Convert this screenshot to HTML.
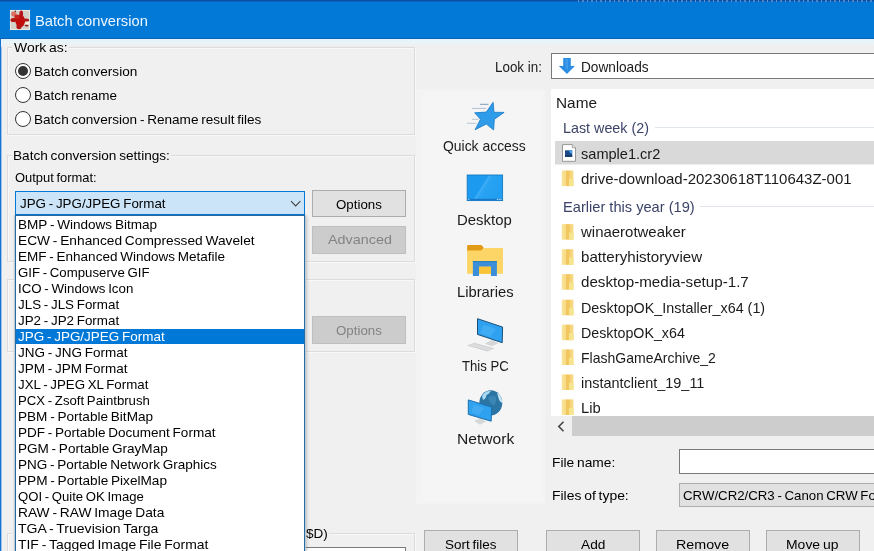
<!DOCTYPE html>
<html><head><meta charset="utf-8"><title>Batch conversion</title>
<style>
*{box-sizing:border-box;margin:0;padding:0}
html,body{width:874px;height:551px;overflow:hidden;background:#f0f0f0;font-family:"Liberation Sans",sans-serif;color:#000}
.a{position:absolute}
.tx{position:absolute;white-space:pre;line-height:20px;height:20px;transform-origin:0 0}
.gb{position:absolute;border:1px solid #dcdcdc;box-shadow:1px 1px 0 #f8f8f8, inset 1px 1px 0 #f8f8f8}
.mask{position:absolute;background:#f0f0f0}
.radio{position:absolute;width:16px;height:16px;border:1px solid #333;border-radius:50%;background:#fff}
.btn{position:absolute;border:1px solid #adadad;background:#e1e1e1}
.btn.dis{background:#cccccc;border-color:#bfbfbf}
svg{position:absolute;overflow:visible}
</style></head><body>
<!-- title bar -->
<div class="a" style="left:0;top:0;width:874px;height:39px;background:#0278d7"></div>
<div class="a" style="left:0;top:38px;width:874px;height:1px;background:#0a63b6"></div>
<div class="a" style="left:0;top:0;width:874px;height:1px;background:#0b4fa3"></div>
<div class="a" style="left:0;top:1px;width:874px;height:1px;background:#0a62c2"></div>
<div class="a" style="left:578px;top:0;width:296px;height:2px;opacity:.45;background:repeating-linear-gradient(90deg,#cfe0f5 0,#cfe0f5 1px,transparent 1px,transparent 4px,#9fbfe8 4px,#9fbfe8 6px,transparent 6px,transparent 9px)"></div>
<div class="a" style="left:0;top:39px;width:1px;height:512px;background:#1771d0"></div>
<div class="a" style="left:1px;top:42px;width:1px;height:509px;background:#9cc3ea"></div>
<div class="a" style="left:1px;top:39px;width:873px;height:8px;background:linear-gradient(#e4f4fb,#e9f4f8 50%,#efefec)"></div>

<!-- Work as group -->
<div class="gb" style="left:7px;top:47px;width:408px;height:88px"></div>
<div class="mask" style="left:12px;top:44px;width:57px;height:8px"></div>
<div class="radio" style="left:15px;top:63px"></div>
<div class="a" style="left:18px;top:66px;width:10px;height:10px;border-radius:50%;background:#333"></div>
<div class="radio" style="left:15px;top:87px"></div>
<div class="radio" style="left:15px;top:111px"></div>

<!-- settings group -->
<div class="gb" style="left:7px;top:155px;width:408px;height:107px"></div>
<div class="mask" style="left:12px;top:152px;width:159px;height:8px"></div>
<div class="a" style="left:15px;top:191px;width:290px;height:24px;border:1px solid #0078d7;background:#cce4f7"></div>
<svg style="left:290px;top:200px" width="12" height="8" viewBox="0 0 12 8"><path d="M1 1.2 L5.7 5.9 L10.4 1.2" fill="none" stroke="#444" stroke-width="1.1"/></svg>
<div class="btn" style="left:312px;top:190px;width:94px;height:27px"></div>
<div class="btn dis" style="left:312px;top:226px;width:94px;height:28px"></div>

<!-- third group -->
<div class="gb" style="left:7px;top:279px;width:408px;height:73px"></div>
<div class="btn dis" style="left:312px;top:316px;width:94px;height:28px"></div>

<!-- bottom-left group -->
<div class="gb" style="left:7px;top:533px;width:408px;height:40px"></div>
<div class="mask" style="left:12px;top:530px;width:317px;height:8px"></div>
<div class="a" style="left:200px;top:547px;width:206px;height:20px;border:1px solid #7a7a7a;background:#fff"></div>

<!-- dropdown list -->
<div class="a" style="left:14px;top:215px;width:292px;height:340px;background:#fff;border:1px solid rgba(47,111,160,.35);box-shadow:1px 1px 3px rgba(0,0,0,.2)"></div>
<div class="a" style="left:15px;top:215px;width:290px;height:340px;background:#fff;border:1px solid #2a6a9c"></div>
<div class="a" style="left:16px;top:329px;width:288px;height:15px;background:#0078d7"></div>

<!-- right: look in -->
<div class="a" style="left:551px;top:53px;width:340px;height:26px;border:1px solid #7a7a7a;background:#fff"></div>
<!-- places bar -->
<div class="a" style="left:416px;top:89px;width:129px;height:415px;background:#f3f3f3"></div>
<div class="a" style="left:423px;top:91px;width:120px;height:411px;background:#f5f5f5"></div>
<!-- file list -->
<div class="a" style="left:551px;top:89px;width:330px;height:327px;background:#fff"></div>
<div class="a" style="left:655px;top:127px;width:230px;height:1px;background:#dfe5eb"></div>
<div class="a" style="left:700px;top:206px;width:230px;height:1px;background:#dfe5eb"></div>
<div class="a" style="left:555px;top:141px;width:330px;height:23px;background:#d9d9d9"></div>
<div class="a" style="left:555px;top:164px;width:330px;height:1px;background:#ececec"></div>
<!-- scrollbar -->
<div class="a" style="left:572px;top:416px;width:310px;height:20px;background:#cdcdcd"></div>
<svg style="left:557px;top:421px" width="8" height="11" viewBox="0 0 8 11"><path d="M6.5 0.8 L1.8 5.5 L6.5 10.2" fill="none" stroke="#444" stroke-width="1.6"/></svg>
<!-- file name / type -->
<div class="a" style="left:679px;top:449px;width:220px;height:25px;border:1px solid #7a7a7a;background:#fff"></div>
<div class="a" style="left:679px;top:483px;width:220px;height:24px;border:1px solid #adadad;background:#e1e1e1"></div>
<!-- bottom buttons -->
<div class="btn" style="left:424px;top:530px;width:94px;height:30px"></div>
<div class="btn" style="left:546px;top:530px;width:94px;height:30px"></div>
<div class="btn" style="left:656px;top:530px;width:94px;height:30px"></div>
<div class="btn" style="left:766px;top:530px;width:94px;height:30px"></div>

<svg style="left:0;top:0" width="874" height="551" viewBox="0 0 874 551">
<defs><filter id="b4" x="-20%" y="-20%" width="140%" height="140%"><feGaussianBlur stdDeviation="0.45"/></filter><filter id="b6" x="-20%" y="-20%" width="140%" height="140%"><feGaussianBlur stdDeviation="0.6"/></filter><filter id="b7" x="-20%" y="-20%" width="140%" height="140%"><feGaussianBlur stdDeviation="0.8"/></filter>
<linearGradient id="fold" x1="0" x2="1" y1="0" y2="0"><stop offset="0" stop-color="#f8e49a"/><stop offset="0.33" stop-color="#f6dc86"/><stop offset="0.4" stop-color="#f2c55e"/><stop offset="0.68" stop-color="#f3c964"/><stop offset="0.75" stop-color="#f6d57c"/><stop offset="1" stop-color="#f7da86"/></linearGradient>
<linearGradient id="desk" gradientUnits="userSpaceOnUse" x1="469.2" y1="178.9" x2="494.7" y2="194.9"><stop offset="0" stop-color="#1c9bf0"/><stop offset="0.46" stop-color="#1a9af0"/><stop offset="0.52" stop-color="#3eaef6"/><stop offset="0.6" stop-color="#2aa3f3"/><stop offset="1" stop-color="#239ff1"/></linearGradient>
</defs>
<rect x="10" y="10" width="20" height="20" fill="#d2d0c8"/>
<rect x="10.4" y="10.4" width="19.2" height="19.2" fill="none" stroke="#ecebe6" stroke-width="0.9"/>
<clipPath id="icl"><rect x="10" y="10" width="20" height="20"/></clipPath>
<g clip-path="url(#icl)"><g filter="url(#b6)">
<ellipse cx="13.8" cy="14" rx="2.6" ry="2.5" fill="#dc6f62"/>
<ellipse cx="20.2" cy="21" rx="4.8" ry="6.2" fill="#c20f0d"/>
<ellipse cx="21.2" cy="14" rx="1.9" ry="3.4" fill="#b5181a"/>
<ellipse cx="17" cy="17" rx="2.6" ry="2.4" fill="#c9201c"/>
<ellipse cx="13.6" cy="20" rx="3.2" ry="2" fill="#b51210"/>
<ellipse cx="26" cy="20" rx="3.2" ry="1.6" fill="#b31413"/>
<ellipse cx="19" cy="26.8" rx="2.6" ry="2.4" fill="#b41313"/>
<ellipse cx="27.2" cy="23.2" rx="1.9" ry="1.4" fill="#fbf1dc"/>
<ellipse cx="26.6" cy="25.6" rx="2" ry="0.9" fill="#8f1a17"/>
<ellipse cx="15.4" cy="11.2" rx="0.7" ry="0.8" fill="#4a2422"/>
</g></g>
<g filter="url(#b4)"><path d="M563.2 58.1H570.8V65.9H574.9L567 74L558.8 65.9H563.2Z" fill="#2c8de1"/><path d="M565.5 59V67L568 71V59Z" fill="#4aa3ee" opacity=".7"/></g>
<g filter="url(#b4)">
<path d="M480 104.3H488.5" stroke="#6f8fb3" stroke-width="0.9"/><path d="M472 108.4H486" stroke="#a7b9cf" stroke-width="0.9"/><path d="M472 119.3H478.7" stroke="#b3c2d4" stroke-width="0.9"/><path d="M467 123.3H476.5" stroke="#b3c2d4" stroke-width="0.9"/>
<path d="M493.1 102.3L494 112.3L504.1 112.4L494.3 119.3L493.6 129.9L486.3 124L475.1 129.7L480.5 119.3L474.7 112.8L486.3 112.1Z" fill="#2f9ce9" stroke="#1f7fcc" stroke-width="0.9" stroke-linejoin="round"/>
</g>
<g filter="url(#b4)"><rect x="467.2" y="175" width="35.4" height="25.6" fill="url(#desk)" stroke="#1679c2" stroke-width="0.9"/><rect x="467.6" y="198.8" width="34.6" height="1.6" fill="#1579c8"/>
<rect x="468.3" y="198.9" width="1" height="1" fill="#e8f6ff"/>
<rect x="496.9" y="198.9" width="1" height="1" fill="#e8f6ff"/>
<rect x="498.7" y="198.9" width="1" height="1" fill="#e8f6ff"/>
<rect x="500.5" y="198.9" width="1" height="1" fill="#e8f6ff"/>
</g>
<g filter="url(#b4)">
<path d="M467.1 246.2Q467.1 245.1 468.2 245.1H481.6L483.8 248L481.6 250.9H467.1Z" fill="#e29b12"/>
<path d="M467.1 250.5H481.5L483.6 248H503V273.8H467.1Z" fill="#fcd566"/>
<rect x="467.1" y="248" width="2" height="25.8" fill="#fbe08a" opacity=".0"/>
<rect x="479" y="266.5" width="12" height="7.3" fill="#f9c537"/>
<path d="M472.9 261H496.9V276H491V266.5H479V276H472.9Z" fill="#3b8fd8"/>
<path d="M472.9 261H496.9V262.2H472.9Z" fill="#2f80c5"/>
</g>
<g filter="url(#b4)">
<path d="M484.7 343.5L492 340L498.6 343.2L491.5 346.2Z" fill="#d4d6d8"/>
<path d="M466.8 345.4L474.4 342.7L494.6 348.5L487.7 351.5Z" fill="#cfd0d2"/>
<path d="M470 344.8L490.5 350.4M472.3 344L492.6 349.6" stroke="#efefef" stroke-width="0.6"/>
<path d="M477.5 318.7L502.6 327.1L502.2 342.7L477.5 334.4Z" fill="#2da2f1" stroke="#1c4f74" stroke-width="1"/>
<path d="M484 325L496 329L490 337L480 333Z" fill="#59b8f7" opacity=".45"/>
</g>
<g filter="url(#b4)">
<ellipse cx="490.8" cy="402.8" rx="11.5" ry="12.6" fill="#2c74a3"/>
<path d="M482 396Q485 390.5 491 391Q489 394 486.5 395Q486 399 483 400Z" fill="#a9daf2"/>
<path d="M497 392.5Q502 396 502.2 403Q499.5 402 498.5 398Z" fill="#c5e6f6"/>
<path d="M488 398Q492 394 496 397Q497 402 494 405Q490 404 488 398Z" fill="#3a86b5"/>
<path d="M474 421L480.5 418L486.2 421.5L480 424.7Z" fill="#d6d8da"/>
<path d="M468.3 399.9L491.6 407.1L491.2 421.2L468.3 414.4Z" fill="#2fa1ef" stroke="#1d70ae" stroke-width="1"/>
<path d="M474 405L484 408L479 415L471 412.5Z" fill="#5dbaf8" opacity=".4"/>
</g>
<g filter="url(#b4)">
<path d="M562.5 144.6H572.3L575.5 147.8V161.3H562.5Z" fill="#fff" stroke="#8e8e8e" stroke-width="0.9"/>
<path d="M572.3 144.6V147.8H575.5" fill="#eee" stroke="#8e8e8e" stroke-width="0.8"/>
<rect x="565" y="150.3" width="7.2" height="6.6" fill="#1a4a86"/>
<path d="M568.5 150.3H572.2V154Q569.5 153.5 568.5 150.3Z" fill="#4aa0e6"/>
<rect x="565" y="155.2" width="7.2" height="1.7" fill="#14386a"/>
</g>
<clipPath id="fcl"><rect x="551" y="89" width="330" height="327"/></clipPath><g clip-path="url(#fcl)"><g filter="url(#b6)">
<rect x="561.8" y="170.5" width="11.6" height="15.6" fill="url(#fold)"/>
<rect x="569" y="178.9" width="4.6" height="7.2" fill="#f6e48e"/>
<rect x="561.8" y="224.1" width="11.6" height="15.6" fill="url(#fold)"/>
<rect x="569" y="232.5" width="4.6" height="7.2" fill="#f6e48e"/>
<rect x="561.8" y="249.2" width="11.6" height="15.6" fill="url(#fold)"/>
<rect x="569" y="257.6" width="4.6" height="7.2" fill="#f6e48e"/>
<rect x="561.8" y="274.1" width="11.6" height="15.6" fill="url(#fold)"/>
<rect x="569" y="282.5" width="4.6" height="7.2" fill="#f6e48e"/>
<rect x="561.8" y="299.7" width="11.6" height="15.6" fill="url(#fold)"/>
<rect x="569" y="308.1" width="4.6" height="7.2" fill="#f6e48e"/>
<rect x="561.8" y="324.6" width="11.6" height="15.6" fill="url(#fold)"/>
<rect x="569" y="333.0" width="4.6" height="7.2" fill="#f6e48e"/>
<rect x="561.8" y="349.4" width="11.6" height="15.6" fill="url(#fold)"/>
<rect x="569" y="357.8" width="4.6" height="7.2" fill="#f6e48e"/>
<rect x="561.8" y="374.4" width="11.6" height="15.6" fill="url(#fold)"/>
<rect x="569" y="382.8" width="4.6" height="7.2" fill="#f6e48e"/>
<rect x="561.8" y="399.4" width="11.6" height="15.6" fill="url(#fold)"/>
<rect x="569" y="407.8" width="4.6" height="7.2" fill="#f6e48e"/>
</g></g>
</svg>
<div class="tx" style="left:35.00px;top:11px;font-size:14.5px;transform:scaleX(1.0142);color:#eef7ff">Batch conversion</div>
<div class="tx" style="left:14.00px;top:38px;font-size:13.5px;transform:scaleX(1.0318);word-spacing:-1px">Work as:</div>
<div class="tx" style="left:34.00px;top:62px;font-size:13.5px;transform:scaleX(1.0074);word-spacing:-1px">Batch conversion</div>
<div class="tx" style="left:34.00px;top:86px;font-size:13.5px;transform:scaleX(0.9981);word-spacing:-1px">Batch rename</div>
<div class="tx" style="left:34.00px;top:110px;font-size:13.5px;transform:scaleX(1.0054);word-spacing:-1px">Batch conversion - Rename result files</div>
<div class="tx" style="left:13.00px;top:146px;font-size:13.5px;transform:scaleX(1.0085);word-spacing:-1px">Batch conversion settings:</div>
<div class="tx" style="left:15.00px;top:168px;font-size:13.5px;transform:scaleX(0.9580);word-spacing:-1px">Output format:</div>
<div class="tx" style="left:20.00px;top:194px;font-size:13.5px;transform:scaleX(0.9902);word-spacing:-1px">JPG - JPG/JPEG Format</div>
<div class="tx" style="left:336.00px;top:195px;font-size:13.5px;transform:scaleX(0.9851)">Options</div>
<div class="tx" style="left:328.00px;top:230px;font-size:13.5px;transform:scaleX(1.0643);color:#838383">Advanced</div>
<div class="tx" style="left:336.00px;top:321px;font-size:13.5px;transform:scaleX(0.9851);color:#838383">Options</div>
<div class="tx" style="left:306.00px;top:524px;font-size:13.5px;transform:scaleX(0.9991)">$D)</div>
<div class="tx" style="left:18.00px;top:215px;font-size:13.5px;transform:scaleX(1.0037);word-spacing:-1px">BMP - Windows Bitmap</div>
<div class="tx" style="left:18.00px;top:231px;font-size:13.5px;transform:scaleX(1.0172);word-spacing:-1px">ECW - Enhanced Compressed Wavelet</div>
<div class="tx" style="left:18.00px;top:247px;font-size:13.5px;transform:scaleX(1.0014);word-spacing:-1px">EMF - Enhanced Windows Metafile</div>
<div class="tx" style="left:18.00px;top:263px;font-size:13.5px;transform:scaleX(0.9790);word-spacing:-1px">GIF - Compuserve GIF</div>
<div class="tx" style="left:18.00px;top:279px;font-size:13.5px;transform:scaleX(0.9851);word-spacing:-1px">ICO - Windows Icon</div>
<div class="tx" style="left:18.00px;top:295px;font-size:13.5px;transform:scaleX(0.9913);word-spacing:-1px">JLS - JLS Format</div>
<div class="tx" style="left:18.00px;top:311px;font-size:13.5px;transform:scaleX(0.9913);word-spacing:-1px">JP2 - JP2 Format</div>
<div class="tx" style="left:18.00px;top:327px;font-size:13.5px;transform:scaleX(0.9975);word-spacing:-1px;color:#fff">JPG - JPG/JPEG Format</div>
<div class="tx" style="left:18.00px;top:343px;font-size:13.5px;transform:scaleX(0.9994);word-spacing:-1px">JNG - JNG Format</div>
<div class="tx" style="left:18.00px;top:359px;font-size:13.5px;transform:scaleX(0.9994);word-spacing:-1px">JPM - JPM Format</div>
<div class="tx" style="left:18.00px;top:375px;font-size:13.5px;transform:scaleX(0.9852);word-spacing:-1px">JXL - JPEG XL Format</div>
<div class="tx" style="left:18.00px;top:391px;font-size:13.5px;transform:scaleX(0.9765);word-spacing:-1px">PCX - Zsoft Paintbrush</div>
<div class="tx" style="left:18.00px;top:407px;font-size:13.5px;transform:scaleX(1.0056);word-spacing:-1px">PBM - Portable BitMap</div>
<div class="tx" style="left:18.00px;top:423px;font-size:13.5px;transform:scaleX(1.0019);word-spacing:-1px">PDF - Portable Document Format</div>
<div class="tx" style="left:18.00px;top:439px;font-size:13.5px;transform:scaleX(1.0026);word-spacing:-1px">PGM - Portable GrayMap</div>
<div class="tx" style="left:18.00px;top:455px;font-size:13.5px;transform:scaleX(1.0006);word-spacing:-1px">PNG - Portable Network Graphics</div>
<div class="tx" style="left:18.00px;top:471px;font-size:13.5px;transform:scaleX(1.0079);word-spacing:-1px">PPM - Portable PixelMap</div>
<div class="tx" style="left:18.00px;top:487px;font-size:13.5px;transform:scaleX(0.9717);word-spacing:-1px">QOI - Quite OK Image</div>
<div class="tx" style="left:18.00px;top:503px;font-size:13.5px;transform:scaleX(1.0196);word-spacing:-1px">RAW - RAW Image Data</div>
<div class="tx" style="left:18.00px;top:519px;font-size:13.5px;transform:scaleX(1.0407);word-spacing:-1px">TGA - Truevision Targa</div>
<div class="tx" style="left:18.00px;top:535px;font-size:13.5px;transform:scaleX(1.0315);word-spacing:-1px">TIF - Tagged Image File Format</div>
<div class="tx" style="left:495.00px;top:57px;font-size:14.5px;transform:scaleX(0.9239);color:#1b1b1b">Look in:</div>
<div class="tx" style="left:581.00px;top:57px;font-size:14.5px;transform:scaleX(0.9421);color:#1b1b1b">Downloads</div>
<div class="tx" style="left:556.00px;top:93px;font-size:14.5px;transform:scaleX(1.0595);color:#1b1b1b">Name</div>
<div class="tx" style="left:563.00px;top:118px;font-size:14.5px;transform:scaleX(0.9874);color:#3b4468">Last week (2)</div>
<div class="tx" style="left:581.00px;top:144px;font-size:14.5px;transform:scaleX(1.0042);color:#1b1b1b">sample1.cr2</div>
<div class="tx" style="left:581.00px;top:169px;font-size:14.5px;transform:scaleX(1.0339);color:#1b1b1b">drive-download-20230618T110643Z-001</div>
<div class="tx" style="left:563.00px;top:197px;font-size:14.5px;transform:scaleX(1.0089);color:#3b4468">Earlier this year (19)</div>
<div class="tx" style="left:581.00px;top:222px;font-size:14.5px;transform:scaleX(1.0318);color:#1b1b1b">winaerotweaker</div>
<div class="tx" style="left:581.00px;top:247px;font-size:14.5px;transform:scaleX(1.0439);color:#1b1b1b">batteryhistoryview</div>
<div class="tx" style="left:581.00px;top:272px;font-size:14.5px;transform:scaleX(1.0462);color:#1b1b1b">desktop-media-setup-1.7</div>
<div class="tx" style="left:581.00px;top:298px;font-size:14.5px;transform:scaleX(0.9891);color:#1b1b1b">DesktopOK_Installer_x64 (1)</div>
<div class="tx" style="left:581.00px;top:323px;font-size:14.5px;transform:scaleX(0.9835);color:#1b1b1b">DesktopOK_x64</div>
<div class="tx" style="left:581.00px;top:348px;font-size:14.5px;transform:scaleX(0.9672);color:#1b1b1b">FlashGameArchive_2</div>
<div class="tx" style="left:581.00px;top:373px;font-size:14.5px;transform:scaleX(0.9961);color:#1b1b1b">instantclient_19_11</div>
<div class="tx" style="left:581.00px;top:398px;font-size:14.5px;transform:scaleX(1.0185);color:#1b1b1b">Lib</div>
<div class="tx" style="left:443.00px;top:136px;font-size:14.5px;transform:scaleX(0.9600);color:#1b1b1b">Quick access</div>
<div class="tx" style="left:457.00px;top:210px;font-size:14.5px;transform:scaleX(1.0289);color:#1b1b1b">Desktop</div>
<div class="tx" style="left:457.00px;top:282px;font-size:14.5px;transform:scaleX(1.0179);color:#1b1b1b">Libraries</div>
<div class="tx" style="left:462.00px;top:356px;font-size:14.5px;transform:scaleX(0.9085);color:#1b1b1b">This PC</div>
<div class="tx" style="left:457.00px;top:429px;font-size:14.5px;transform:scaleX(1.0769);color:#1b1b1b">Network</div>
<div class="tx" style="left:552.00px;top:453px;font-size:13.5px;transform:scaleX(1.0199);word-spacing:-1px">File name:</div>
<div class="tx" style="left:552.00px;top:486px;font-size:13.5px;transform:scaleX(1.0294);word-spacing:-1px">Files of type:</div>
<div class="tx" style="left:683.00px;top:486px;font-size:13.5px;transform:scaleX(0.9810);word-spacing:-1px">CRW/CR2/CR3 - Canon CRW Format</div>
<div class="tx" style="left:445.00px;top:535px;font-size:13.5px;transform:scaleX(0.9971);word-spacing:-1px">Sort files</div>
<div class="tx" style="left:581.00px;top:535px;font-size:13.5px;transform:scaleX(1.0160)">Add</div>
<div class="tx" style="left:676.00px;top:535px;font-size:13.5px;transform:scaleX(1.0577)">Remove</div>
<div class="tx" style="left:786.00px;top:535px;font-size:13.5px;transform:scaleX(1.0334);word-spacing:-1px">Move up</div>
</body></html>
